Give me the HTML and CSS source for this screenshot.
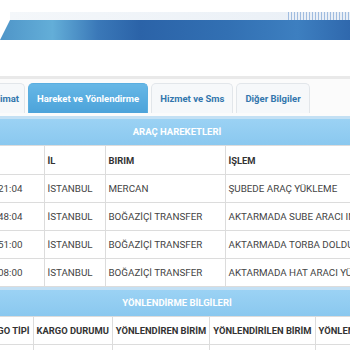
FILE: index.html
```html
<!DOCTYPE html>
<html lang="tr">
<head>
    <meta charset="UTF-8">
    <meta name="viewport" content="width=device-width, initial-scale=1.0">
    <title>Gönderi Takip</title>
    <link rel="stylesheet" href="styles.css">
</head>
<body>
    <div class="banner">
        <div class="banner-top"></div>
        <div class="banner-bar"></div>
    </div>

    <div class="viewport">
        <div class="page">
            <div class="tabs">
                <div class="tab">Teslim Talimat</div>
                <div class="tab active">Hareket ve Yönlendirme</div>
                <div class="tab">Hizmet ve Sms</div>
                <div class="tab">Diğer Bilgiler</div>
            </div>

            <div class="pane">
                <div class="band">ARAÇ HAREKETLERİ</div>
                <table class="grid moves">
                    <colgroup>
                        <col class="c-date">
                        <col class="c-city">
                        <col class="c-unit">
                        <col class="c-op">
                    </colgroup>
                    <thead>
                        <tr>
                            <th>TARİH</th>
                            <th>İL</th>
                            <th>BIRIM</th>
                            <th>İŞLEM</th>
                        </tr>
                    </thead>
                    <tbody>
                        <tr>
                            <td>12.03.2021 10:21:04</td>
                            <td>İSTANBUL</td>
                            <td>MERCAN</td>
                            <td>ŞUBEDE ARAÇ YÜKLEME</td>
                        </tr>
                        <tr>
                            <td>12.03.2021 13:48:04</td>
                            <td>İSTANBUL</td>
                            <td>BOĞAZİÇİ TRANSFER</td>
                            <td>AKTARMADA SUBE ARACI INDIRME</td>
                        </tr>
                        <tr>
                            <td>12.03.2021 14:51:00</td>
                            <td>İSTANBUL</td>
                            <td>BOĞAZİÇİ TRANSFER</td>
                            <td>AKTARMADA TORBA DOLDURMA</td>
                        </tr>
                        <tr>
                            <td>12.03.2021 16:08:00</td>
                            <td>İSTANBUL</td>
                            <td>BOĞAZİÇİ TRANSFER</td>
                            <td>AKTARMADA HAT ARACI YÜKLEME</td>
                        </tr>
                    </tbody>
                </table>
            </div>

            <div class="pane">
                <div class="band">YÖNLENDİRME BİLGİLERİ</div>
                <table class="grid routes">
                    <thead>
                        <tr>
                            <th class="c-no">NO</th>
                            <th>KARGO TİPİ</th>
                            <th>KARGO DURUMU</th>
                            <th>YÖNLENDİREN BİRİM</th>
                            <th>YÖNLENDİRİLEN BİRİM</th>
                            <th>YÖNLENDİRME TARİHİ</th>
                        </tr>
                    </thead>
                    <tbody>
                        <tr>
                            <td>&nbsp;</td>
                            <td></td>
                            <td></td>
                            <td></td>
                            <td></td>
                            <td></td>
                        </tr>
                    </tbody>
                </table>
            </div>
        </div>
    </div>
</body>
</html>
```

FILE: styles.css
```css
body {
    margin: 0;
    font-family: Roboto, "Liberation Sans", sans-serif;
    background: #fff;
    color: #444;
}

/* ust banner */
.banner {
    padding-top: 12px;
    height: 28px;
}
.banner-top {
    height: 8px;
    margin-left: 10px;
    background:
        repeating-linear-gradient(90deg, rgba(70, 125, 195, 0.45) 0 1px, transparent 1px 3px) right / 62px 100% no-repeat,
        linear-gradient(90deg, #f4f7fa, #e9eff6);
}
.banner-bar {
    height: 20px;
    background: linear-gradient(90deg, #4f95c8 0%, #63aed8 15%, #3a78b8 28%, #2b63a8 40%, #3270b3 65%, #3d7fc0 85%, #2f68ad 100%);
    clip-path: polygon(10px 0, 100% 0, 100% 100%, 0 100%);
}

/* yatay kaydirilmis icerik */
.viewport {
    margin-top: 36px;
    overflow: hidden;
    border-top: 3px solid #e9e9e9;
}
.page {
    margin-left: -70px;
}

.tabs {
    display: flex;
    gap: 3px;
    padding: 4px 0 3px;
    background: #fbfbfb;
}
.tab {
    height: 30px;
    line-height: 30px;
    padding: 0 8px;
    font-size: 9.5px;
    font-weight: bold;
    color: #3276ad;
    background: #f6f8fa;
    border: 1px solid #e2e6ea;
    border-bottom: none;
    border-radius: 5px 5px 0 0;
    box-sizing: border-box;
}
.tab:first-child {
    width: 95px;
    padding-right: 5px;
    text-align: right;
}
.tab.active {
    color: #fff;
    background: linear-gradient(#66b7e6, #4ca3da);
    border-color: #5aaee0;
}

.pane {
    width: 494px;
    border-top: 3px solid #c3e0f4;
}
.band {
    height: 26px;
    line-height: 26px;
    text-align: center;
    font-size: 9.5px;
    font-weight: bold;
    color: #fff;
    background: linear-gradient(#9bd2f4, #8ac8ef);
}

.grid {
    border-collapse: collapse;
    font-size: 9.8px;
    white-space: nowrap;
}
.grid th, .grid td {
    text-align: left;
    padding: 0 3px;
    border: 1px solid #dcdcdc;
}
.grid th {
    color: #333;
    font-size: 9.4px;
    font-weight: bold;
    height: 28px;
}
.grid td {
    height: 27px;
}
.grid tr > :first-child {
    border-left: none;
}

.moves {
    width: 494px;
    table-layout: fixed;
}
.c-date { width: 114px; }
.c-city { width: 61px; }
.c-unit { width: 120px; }
.c-op { width: 199px; }

.routes th {
    height: 27px;
}
.routes .c-no {
    width: 39px;
}
```
